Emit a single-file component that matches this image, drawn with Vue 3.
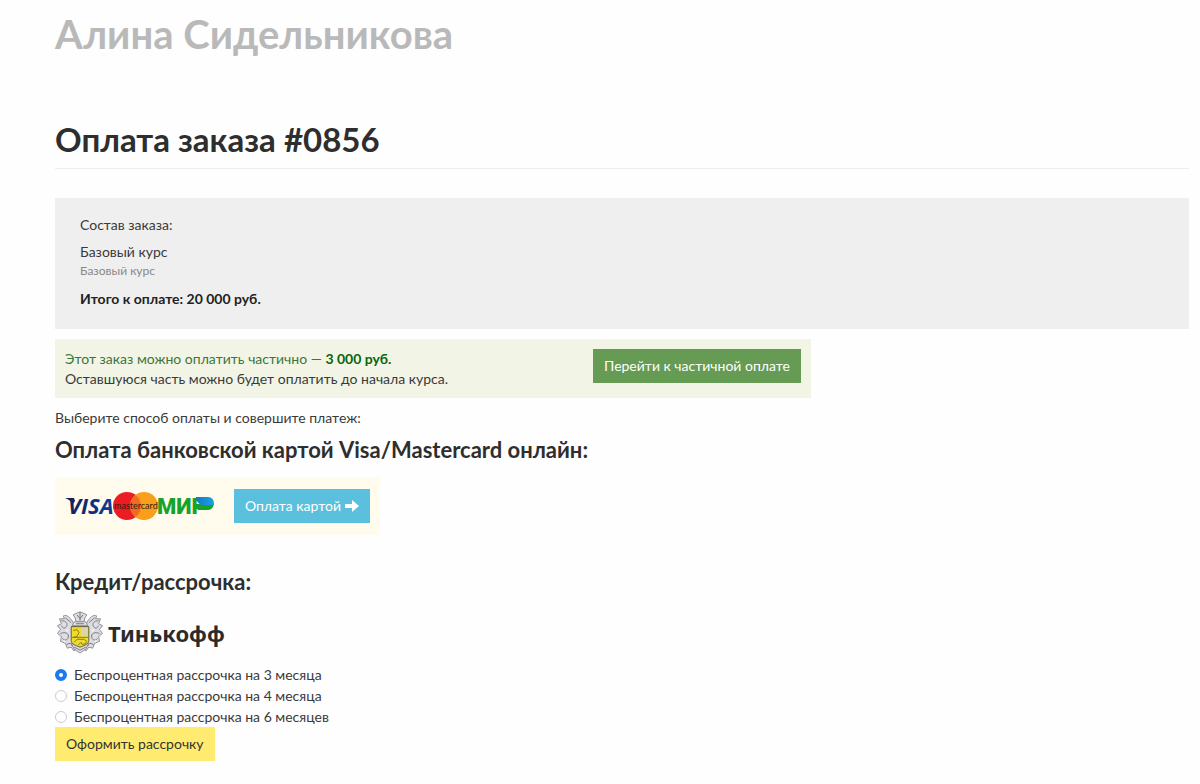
<script setup>
import { ref } from 'vue'

const plan = ref('3')
const plans = [
  { value: '3', label: 'Беспроцентная рассрочка на 3 месяца' },
  { value: '4', label: 'Беспроцентная рассрочка на 4 месяца' },
  { value: '6', label: 'Беспроцентная рассрочка на 6 месяцев' }
]
</script>

<template>
  <main class="page">
    <div class="owner">Алина Сидельникова</div>
    <h1 class="title">Оплата заказа #0856</h1>

    <section class="order">
      <p class="order-caption">Состав заказа:</p>
      <p class="order-item">Базовый курс</p>
      <p class="order-note">Базовый курс</p>
      <p class="order-total">Итого к оплате: 20 000 руб.</p>
    </section>

    <section class="partial">
      <div>
        <p class="partial-lead">Этот заказ можно оплатить частично — <strong>3 000 руб.</strong></p>
        <p>Оставшуюся часть можно будет оплатить до начала курса.</p>
      </div>
      <button type="button" class="btn btn-green">Перейти к частичной оплате</button>
    </section>

    <p class="hint">Выберите способ оплаты и совершите платеж:</p>

    <h2 class="heading">Оплата банковской картой Visa/Mastercard онлайн:</h2>
    <section class="card-pay">
      <svg class="cards" viewBox="0 0 150 34" role="img" aria-label="Visa, Mastercard, МИР">
        <defs>
          <linearGradient id="visa" x1="0" x2="1" y1="0" y2="0">
            <stop offset="0" stop-color="#14205c" />
            <stop offset="1" stop-color="#0c3c9c" />
          </linearGradient>
          <linearGradient id="mir" x1="0" x2="1" y1="0" y2="0">
            <stop offset="0" stop-color="#1676c8" />
            <stop offset="1" stop-color="#17a5e0" />
          </linearGradient>
        </defs>
        <path d="M0 9h9l1 3-2 3C6 12 3 10 0 9z" fill="#14205c" />
        <text class="visa" x="3" y="25">VISA</text>
        <circle cx="62" cy="17" r="14" fill="#eb1c24" />
        <circle cx="79" cy="17" r="14" fill="#f99f1b" />
        <path d="M70.500 5.900a14 14 0 0 1 0 22.200a14 14 0 0 1 0-22.200z" fill="#f26b21" />
        <text class="master" x="49" y="20">mastercard</text>
        <text class="mir" x="92" y="25">МИР</text>
        <path d="M130 15h19c-1 4-3 6-6 6h-10z" fill="#17a32b" />
        <path d="M131 8h12c4 0 6 3 6 7l-1 1h-10c-4 0-7-4-7-8z" fill="url(#mir)" />
      </svg>
      <button type="button" class="btn btn-blue">
        Оплата картой
        <svg class="arrow" viewBox="0 0 14 14" aria-hidden="true">
          <path d="M0 5h7V1l7 6-7 6V9H0z" fill="currentColor" />
        </svg>
      </button>
    </section>

    <h2 class="heading">Кредит/рассрочка:</h2>
    <div class="bank">
      <svg class="crest" viewBox="0 0 48 44" aria-hidden="true">
        <g fill="#dedee2" stroke="#8d8d94" stroke-width="1">
          <path d="M18 14C15 7 10 3 7 5l1 3-5 0 2 5-4 2 3 4-3 4 4 3-1 5 5 2 2 5 4-1 3 4 3-3 2-6z" />
          <path d="M30 14c3-7 8-11 11-9l-1 3 5 0-2 5 4 2-3 4 3 4-4 3 1 5-5 2-2 5-4-1-3 4-3-3-2-6z" />
          <path d="M15 33l3 6 6 4 6-4 3-6z" />
          <path d="M19 7l-2-3 4-2 3-1 3 1 4 2-2 3-1 4h-8z" />
          <path d="M18 11h12l2 4H16z" />
        </g>
        <g fill="none" stroke="#77777f" stroke-width="1">
          <path d="M5 10c5 0 7 3 5 6s-4 1-5-1M4 23c5-2 9 0 8 4s-5 3-6 1M10 35c2-3 6-2 6 1M43 10c-5 0-7 3-5 6s4 1 5-1M44 23c-5-2-9 0-8 4s5 3 6 1M38 35c-2-3-6-2-6 1M21 4l3 4 3-4M24 1v9M20 13h8M9 7l6 5M39 7l-6 5M18 37l6 3 6-3" />
        </g>
        <g fill="#fff">
          <circle cx="11" cy="20" r="1" /><circle cx="37" cy="20" r="1" />
          <circle cx="8" cy="31" r="1" /><circle cx="40" cy="31" r="1" />
        </g>
        <path d="M15 16h18v14c0 4-4 5-9 7-5-2-9-3-9-7z" fill="#f0da2c" stroke="#5d5a40" />
        <path d="M25 17h7v9h-7z" fill="#d8d6b0" />
        <path d="M17 20l4-1 2 3-2 4-4 1M18 32l3-3h7l3 2-2 3h-3l-1-2-3 3M16 27h16" fill="none" stroke="#8b7d1d" />
      </svg>
      <span class="bank-name">Тинькофф</span>
    </div>

    <form class="credit" @submit.prevent>
      <label v-for="p in plans" :key="p.value" class="option">
        <input v-model="plan" type="radio" name="plan" :value="p.value" />
        <span>{{ p.label }}</span>
      </label>
      <button type="submit" class="btn btn-yellow">Оформить рассрочку</button>
    </form>
  </main>
</template>

<style>
body {
  margin: 0;
  background: #fefefe;
}
</style>

<style scoped>
.page {
  padding: 12px 11px 23px 55px;
  color: #3a3a3a;
  font: 14px/20px Lato, "Open Sans", sans-serif;
}
p,
h1,
h2 {
  margin: 0;
}
.owner {
  color: #b9b9b9;
  font-size: 40px;
  font-weight: 700;
  line-height: 44px;
}
.title {
  margin-top: 66px;
  padding-bottom: 12px;
  border-bottom: 1px solid #eee;
  color: #2e2e2e;
  font-size: 33px;
  font-weight: 700;
  line-height: 34px;
}
.order {
  margin-top: 29px;
  padding: 17px 25px 20px;
  background: #efefef;
}
.order-item {
  margin-top: 7px;
}
.order-note {
  color: #888;
  font-size: 12px;
  line-height: 17px;
}
.order-total {
  margin-top: 10px;
  color: #222;
  font-weight: 700;
}
.partial {
  display: flex;
  justify-content: space-between;
  align-items: flex-start;
  box-sizing: border-box;
  max-width: 756px;
  margin-top: 10px;
  padding: 10px 10px 9px;
  background: #f2f5e5;
}
.partial-lead {
  color: #3c763d;
}
.partial-lead strong {
  color: #0b640b;
}
.btn {
  display: inline-flex;
  align-items: center;
  height: 34px;
  padding: 0 11px;
  border: 0;
  font: inherit;
  cursor: pointer;
}
.btn-green {
  background: #659b52;
  color: #fff;
}
.btn-blue {
  gap: 4px;
  background: #5bc0de;
  color: #fff;
}
.btn-yellow {
  background: #ffeb70;
  color: #333;
}
.hint {
  margin-top: 10px;
}
.heading {
  margin-top: 9px;
  color: #2e2e2e;
  font-size: 22px;
  font-weight: 700;
  line-height: 26px;
}
.card-pay {
  display: flex;
  align-items: center;
  justify-content: space-between;
  box-sizing: border-box;
  max-width: 325px;
  margin: 14px 0 34px;
  padding: 12px 10px;
  background: #fffcee;
}
.cards {
  width: 150px;
  height: 34px;
}
.visa {
  fill: url(#visa);
  font: italic 700 22px "Open Sans", sans-serif;
}
.master {
  fill: #3a1a10;
  font: 9px Lato, sans-serif;
}
.mir {
  fill: #17a32b;
  font: 900 22px Roboto, sans-serif;
}
.arrow {
  width: 14px;
  height: 14px;
}
.bank {
  display: flex;
  align-items: center;
  gap: 4px;
  margin: 16px 0 10px 1px;
}
.crest {
  width: 48px;
  height: 43px;
}
.bank-name {
  color: #2b2b2b;
  font: 700 22px/32px "Noto Sans", sans-serif;
}
.credit {
  display: flex;
  flex-direction: column;
  align-items: flex-start;
}
.option {
  display: flex;
  align-items: center;
  gap: 7px;
  line-height: 21px;
}
.option input {
  box-sizing: border-box;
  width: 12px;
  height: 12px;
  margin: 0;
  appearance: none;
  border: 1px solid #ccc;
  border-radius: 50%;
  background: #fff;
}
.option input:checked {
  border: 4px solid #1a7af0;
}
</style>
